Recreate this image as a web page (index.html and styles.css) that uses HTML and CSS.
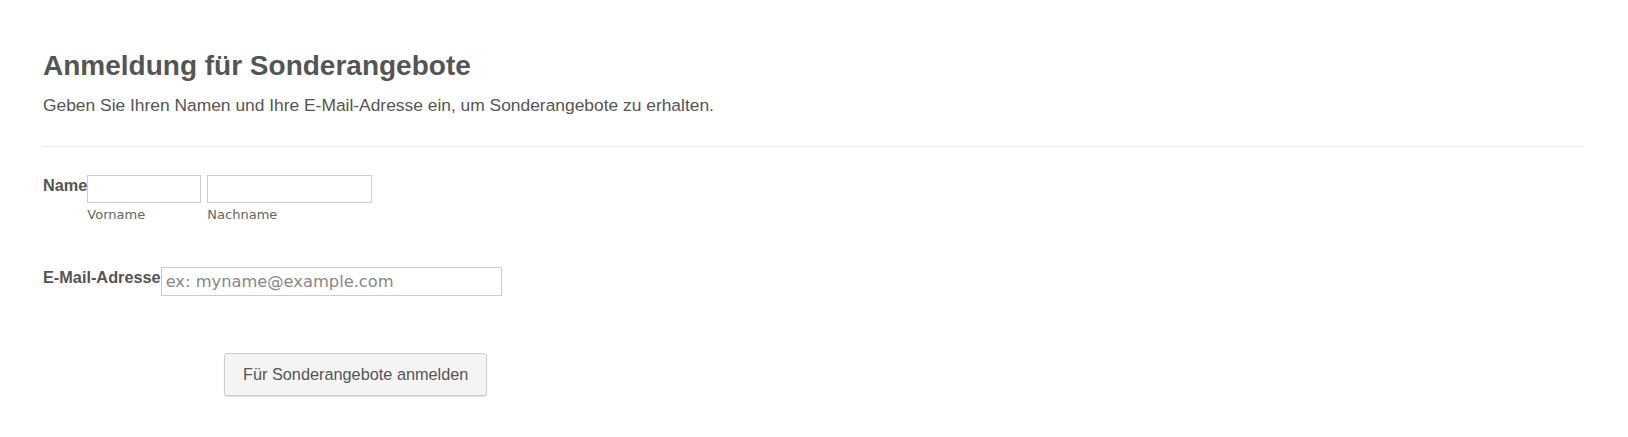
FILE: index.html
```html
<!DOCTYPE html>
<html lang="de">
<head>
    <meta charset="UTF-8">
    <meta name="viewport" content="width=device-width, initial-scale=1.0">
    <title>Anmeldung für Sonderangebote</title>
    <link rel="stylesheet" href="styles.css">
</head>
<body>
    <form class="form-all">
        <div class="form-header">
            <h2 class="form-title">Anmeldung für Sonderangebote</h2>
            <div class="form-subtitle">Geben Sie Ihren Namen und Ihre E-Mail-Adresse ein, um Sonderangebote zu erhalten.</div>
        </div>

        <div class="form-line">
            <label class="form-label">Name</label>
            <div class="form-input">
                <span class="sub-field">
                    <input type="text" class="text-input first" id="firstName">
                    <label class="sublabel" for="firstName">Vorname</label>
                </span>
                <span class="sub-field">
                    <input type="text" class="text-input last" id="lastName">
                    <label class="sublabel" for="lastName">Nachname</label>
                </span>
            </div>
        </div>

        <div class="form-line email-line">
            <label class="form-label" for="email">E-Mail-Adresse</label>
            <div class="form-input">
                <input type="email" class="text-input email" id="email" placeholder="ex: myname@example.com">
            </div>
        </div>

        <div class="form-buttons">
            <button type="submit" class="submit-button">Für Sonderangebote anmelden</button>
        </div>
    </form>
</body>
</html>
```

FILE: styles.css
```css
body {
    margin: 0;
    background-color: #fff;
    font-family: "Liberation Sans", Arial, sans-serif;
    color: #555;
}

.form-all {
    padding: 0 44px 0 43px;
}

.form-header {
    padding-top: 50px;
    padding-bottom: 30px;
    border-bottom: 1px solid #e6e6e6;
}

.form-title {
    margin: 0;
    font-size: 28px;
    line-height: 32px;
    font-weight: bold;
    color: #555;
}

.form-subtitle {
    margin-top: 12px;
    font-size: 17.4px;
    line-height: 22px;
}

.form-line {
    display: flex;
    align-items: flex-start;
    margin-top: 28px;
}

.email-line {
    margin-top: 44px;
}

.form-label {
    font-size: 16.3px;
    font-weight: bold;
    line-height: 20px;
}

.form-input {
    display: flex;
    gap: 6px;
}

.sub-field {
    display: flex;
    flex-direction: column;
}

.text-input {
    box-sizing: border-box;
    height: 28px;
    margin: 0;
    padding: 2px 4px;
    border: 1px solid #ccc;
    box-shadow: inset 0 0 1px rgba(0, 0, 0, 0.05);
    font-family: "DejaVu Sans", Verdana, sans-serif;
    font-size: 16.3px;
    color: #555;
}

.text-input.first {
    width: 114px;
}

.text-input.last {
    width: 165px;
}

.text-input.email {
    width: 341px;
    height: 29px;
}

.text-input::placeholder {
    color: #888;
}

.sublabel {
    margin-top: 4px;
    font-family: "DejaVu Sans", Verdana, sans-serif;
    font-size: 13px;
    line-height: 16px;
    color: #666;
}

.form-buttons {
    padding: 57px 0 40px 181px;
}

.submit-button {
    box-sizing: border-box;
    height: 43px;
    padding: 0 18px;
    background-color: #f4f4f4;
    border: 1px solid #ccc;
    border-radius: 3px;
    box-shadow: 0 1px 1px rgba(0, 0, 0, 0.12);
    font-family: "Liberation Sans", Arial, sans-serif;
    font-size: 16.3px;
    color: #555;
    cursor: pointer;
}
```
